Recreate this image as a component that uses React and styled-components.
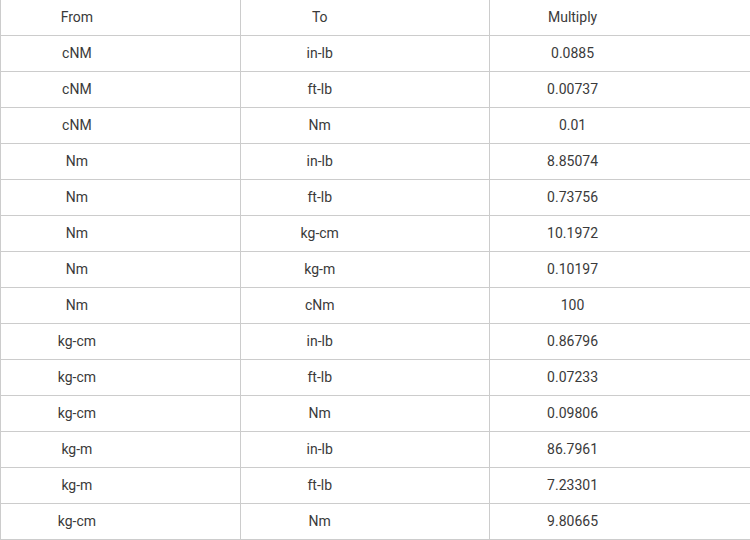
import React from "react"
import styled, { createGlobalStyle } from "styled-components"

const GlobalStyle = createGlobalStyle`
    body {
        margin: 0;
        background: #fff;
        font-family: Roboto, "Liberation Sans", sans-serif;
    }
`

const Table = styled.table`
    border-collapse: collapse;
    width: 750px;
    table-layout: fixed;
    color: #3a3a3a;
    font-size: 14px;
`

const Col = styled.col`
    width: ${props => props.width}px;
`

const Cell = styled.td`
    border: 1px solid #ccc;
    height: 33px;
    padding: 0 0 2px;
    vertical-align: middle;

    tr:first-child > & {
        border-top: none;
    }
`

const Label = styled.div`
    width: 63.5%;
    text-align: center;
`

const rows = [
    ["From", "To", "Multiply"],
    ["cNM", "in-lb", "0.0885"],
    ["cNM", "ft-lb", "0.00737"],
    ["cNM", "Nm", "0.01"],
    ["Nm", "in-lb", "8.85074"],
    ["Nm", "ft-lb", "0.73756"],
    ["Nm", "kg-cm", "10.1972"],
    ["Nm", "kg-m", "0.10197"],
    ["Nm", "cNm", "100"],
    ["kg-cm", "in-lb", "0.86796"],
    ["kg-cm", "ft-lb", "0.07233"],
    ["kg-cm", "Nm", "0.09806"],
    ["kg-m", "in-lb", "86.7961"],
    ["kg-m", "ft-lb", "7.23301"],
    ["kg-cm", "Nm", "9.80665"],
]

const App = () => (
    <>
        <GlobalStyle />
        <Table>
            <colgroup>
                <Col width={240} />
                <Col width={249} />
                <Col width={261} />
            </colgroup>
            <tbody>
                {rows.map((row, i) => (
                    <tr key={i}>
                        {row.map((text, j) => (
                            <Cell key={j}>
                                <Label>{text}</Label>
                            </Cell>
                        ))}
                    </tr>
                ))}
            </tbody>
        </Table>
    </>
)

export default App
